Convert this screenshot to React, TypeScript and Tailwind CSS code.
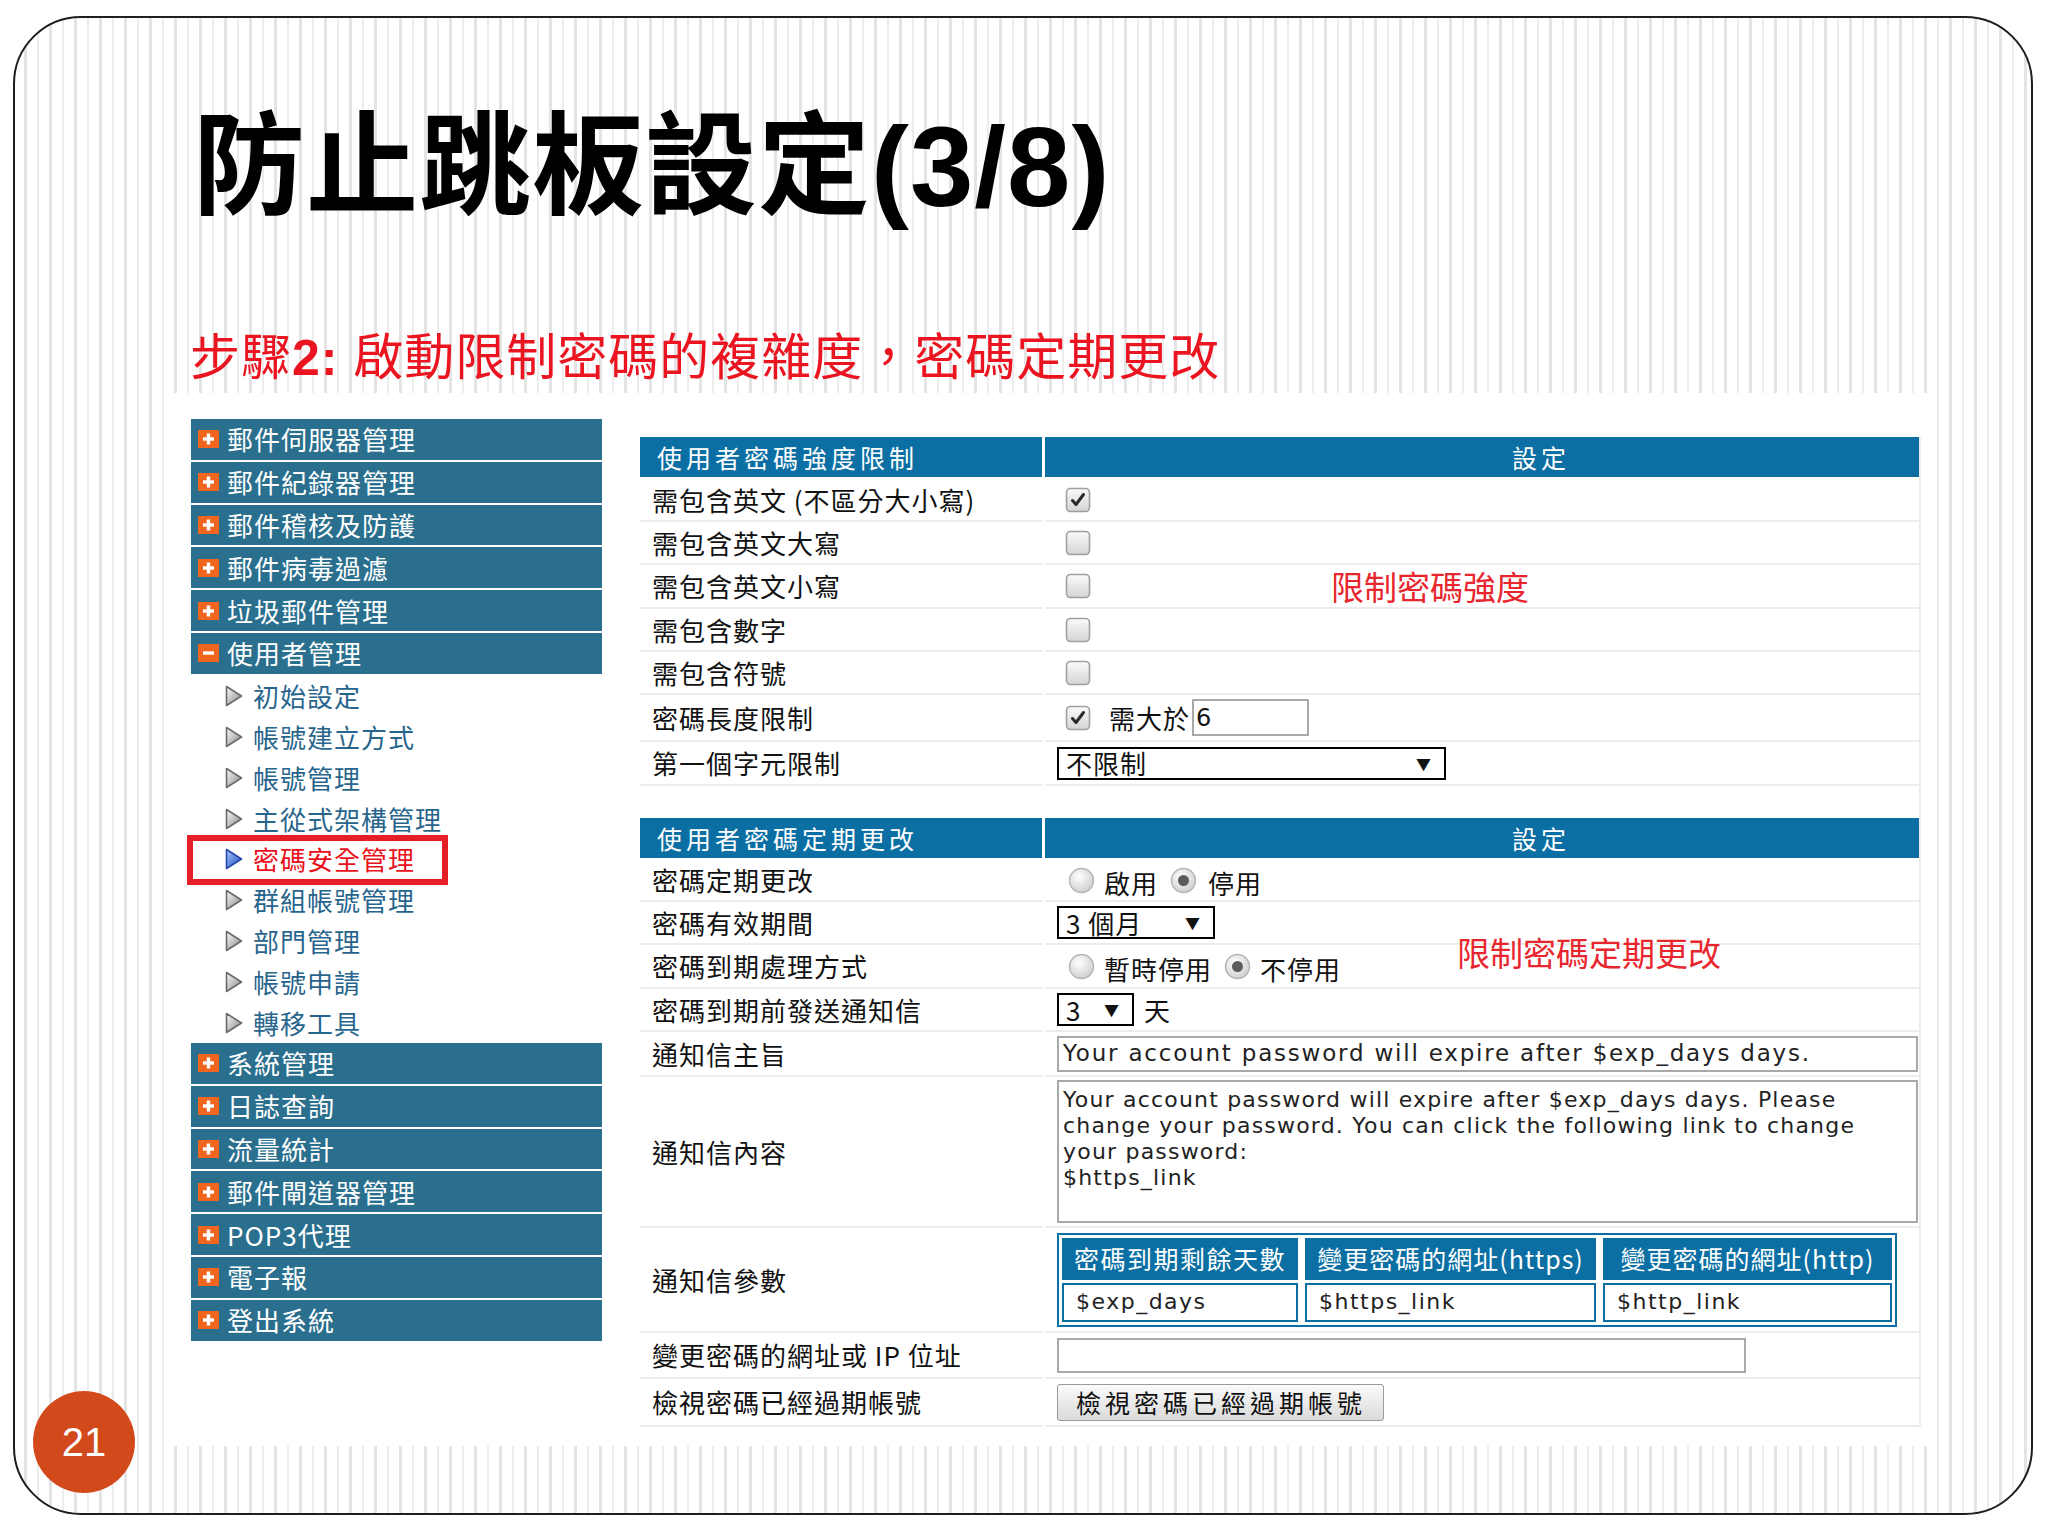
import React from "react";

const topMenu = ["郵件伺服器管理", "郵件紀錄器管理", "郵件稽核及防護", "郵件病毒過濾", "垃圾郵件管理"];
const subMenu = ["初始設定", "帳號建立方式", "帳號管理", "主從式架構管理", "密碼安全管理", "群組帳號管理", "部門管理", "帳號申請", "轉移工具"];
const bottomMenu = ["系統管理", "日誌查詢", "流量統計", "郵件閘道器管理", "POP3代理", "電子報", "登出系統"];

function PlusIcon({ minus }: { minus?: boolean }) {
  return (
    <svg width="21" height="18" viewBox="0 0 21 18" className="shrink-0">
      <rect x="0" y="0" width="21" height="18" fill="#f0661f" />
      <rect x="5" y="7.3" width="11" height="3.4" fill="#ffffff" />
      {!minus && <rect x="8.8" y="3.5" width="3.4" height="11" fill="#ffffff" />}
    </svg>
  );
}

function Arrow({ active }: { active?: boolean }) {
  const id = active ? "arrA" : "arrG";
  return (
    <svg width="18" height="22" viewBox="0 0 18 22" className="shrink-0">
      <defs>
        <linearGradient id={id} x1="0" y1="0" x2="1" y2="1">
          <stop offset="0" stopColor={active ? "#a8c8ff" : "#fbfbfb"} />
          <stop offset="1" stopColor={active ? "#1a4cc2" : "#858585"} />
        </linearGradient>
      </defs>
      <polygon
        points="1.5,1.5 16.5,11 1.5,20.5"
        fill={`url(#${id})`}
        stroke={active ? "#2447a8" : "#6a6a6a"}
        strokeWidth="1.6"
        strokeLinejoin="round"
      />
    </svg>
  );
}

function MenuHeader({ label, minus }: { label: string; minus?: boolean }) {
  return (
    <div className="h-[40.8px] mb-[2px] bg-[#2a6f8e] flex items-center">
      <div className="ml-[7px] flex">
        <PlusIcon minus={minus} />
      </div>
      <span className="ml-[8px] text-[26px] leading-none text-white tracking-[1px]">{label}</span>
    </div>
  );
}

function Checkbox({ checked }: { checked?: boolean }) {
  return (
    <svg width="26" height="26" viewBox="0 0 26 26" className="shrink-0">
      <defs>
        <linearGradient id="cbg" x1="0" y1="0" x2="0" y2="1">
          <stop offset="0" stopColor="#fbfbfb" />
          <stop offset="1" stopColor="#d4d4d4" />
        </linearGradient>
      </defs>
      <rect x="1.5" y="1.5" width="23" height="23" rx="4" fill="url(#cbg)" stroke="#a0a0a0" strokeWidth="1.6" />
      {checked && (
        <path d="M7.5 13.5 L11 17.5 L18.5 7.5" fill="none" stroke="#2a2a2a" strokeWidth="3" strokeLinecap="round" strokeLinejoin="round" />
      )}
    </svg>
  );
}

function Radio({ checked }: { checked?: boolean }) {
  return (
    <svg width="27" height="27" viewBox="0 0 27 27" className="shrink-0">
      <defs>
        <radialGradient id="rbg" cx="0.4" cy="0.35" r="0.7">
          <stop offset="0" stopColor="#ffffff" />
          <stop offset="1" stopColor="#cdcdcd" />
        </radialGradient>
      </defs>
      <circle cx="13.5" cy="13.5" r="12" fill="url(#rbg)" stroke="#b4b4b4" strokeWidth="1.4" />
      {checked && <circle cx="13.5" cy="13.5" r="5.5" fill="#5c5c5c" />}
    </svg>
  );
}

function Select({ label, width }: { label: string; width: string }) {
  return (
    <div className={`${width} h-[33px] border-2 border-black bg-white flex items-center justify-between pl-[7px] pr-[12px]`}>
      <span className="text-[26px] leading-none tracking-[1px]">{label}</span>
      <span className="text-[15px] leading-none">▼</span>
    </div>
  );
}

function Row({
  label,
  h,
  children,
}: {
  label: string;
  h: string;
  children?: React.ReactNode;
}) {
  return (
    <div className={`grid grid-cols-[402px_1fr] gap-x-[3px] ${h}`}>
      <div className="border-b-2 border-[#ececec] flex items-center pl-[12px] text-[26px] leading-none tracking-[1px] text-[#111]">
        {label}
      </div>
      <div className="border-b-2 border-[#ececec] flex items-center pl-[12px] text-[26px] leading-none tracking-[1px] text-[#111]">
        {children}
      </div>
    </div>
  );
}

function TableHeader({ title }: { title: string }) {
  return (
    <div className="grid grid-cols-[402px_1fr] gap-x-[3px] h-[40px] mb-[2px]">
      <div className="bg-[#0b6fa4] flex items-center pl-[17px] text-[25px] leading-none tracking-[4px] text-white">
        {title}
      </div>
      <div className="bg-[#0b6fa4] flex items-center justify-center pl-[118px] text-[25px] leading-none tracking-[4px] text-white">
        設定
      </div>
    </div>
  );
}

const mono = "font-['DejaVu_Sans',sans-serif]";

export default function App() {
  return (
    <div className="w-[2048px] h-[1536px] bg-white pt-[16px] pl-[13px] font-['Liberation_Sans','Noto_Sans_CJK_TC',sans-serif]">
      <div className="relative w-[2020px] h-[1499px] rounded-[68px] border-2 border-[#1e1e1e] overflow-hidden flex flex-col bg-[image:repeating-linear-gradient(90deg,#ffffff_0px,#ffffff_9px,#e4e4e4_9px,#e4e4e4_12px,#ffffff_12px,#ffffff_22px,#ececec_22px,#ececec_24px,#ffffff_24px,#ffffff_25px)]">
        <h1 className="mt-[92px] h-[112px] pl-[178px] text-[112px] leading-none font-bold text-black tracking-[1px] whitespace-nowrap">
          防止跳板設定<span className="text-[114px]">(3/8)</span>
        </h1>
        <div className="mt-[111px] pl-[175px] text-[50px] leading-none text-[#ea1520] tracking-[1px]">
          步驟<span className="font-bold">2:</span> 啟動限制密碼的複雜度，密碼定期更改
        </div>

        <div className="mt-[10px] ml-[155px] w-[1760px] h-[1053px] bg-white flex pl-[21px] pt-[26px] font-['Noto_Sans_CJK_TC',sans-serif]">
          {/* sidebar */}
          <div className="w-[411px] shrink-0 flex flex-col">
            {topMenu.map((m) => (
              <MenuHeader key={m} label={m} />
            ))}
            <MenuHeader label="使用者管理" minus />
            {subMenu.map((s) => {
              const active = s === "密碼安全管理";
              return (
                <div key={s} className="relative h-[40.8px] flex items-center">
                  <div className="ml-[34px] flex">
                    <Arrow active={active} />
                  </div>
                  <span
                    className={`ml-[10px] text-[26px] leading-none tracking-[1px] ${
                      active ? "text-[#e8101a]" : "text-[#28658c]"
                    }`}
                  >
                    {s}
                  </span>
                  {active && (
                    <div className="absolute -left-[4px] -top-[4px] w-[261px] h-[50px] border-[6px] border-[#e61e25]" />
                  )}
                </div>
              );
            })}
            {bottomMenu.map((m) => (
              <MenuHeader key={m} label={m} />
            ))}
          </div>

          {/* content */}
          <div className="ml-[38px] w-[1281px] mt-[18px] flex flex-col border-r-2 border-[#ececec] self-start">
            <TableHeader title="使用者密碼強度限制" />
            <Row label="需包含英文 (不區分大小寫)" h="h-[43px]">
              <div className="ml-[8px] flex"><Checkbox checked /></div>
            </Row>
            <Row label="需包含英文大寫" h="h-[43px]">
              <div className="ml-[8px] flex"><Checkbox /></div>
            </Row>
            <Row label="需包含英文小寫" h="h-[44px]">
              <div className="ml-[8px] flex"><Checkbox /></div>
              <span className="ml-[240px] text-[33px] leading-none tracking-[0px] text-[#e8262e]">限制密碼強度</span>
            </Row>
            <Row label="需包含數字" h="h-[43px]">
              <div className="ml-[8px] flex"><Checkbox /></div>
            </Row>
            <Row label="需包含符號" h="h-[43px]">
              <div className="ml-[8px] flex"><Checkbox /></div>
            </Row>
            <Row label="密碼長度限制" h="h-[47px]">
              <div className="ml-[8px] flex"><Checkbox checked /></div>
              <span className="ml-[18px]">需大於</span>
              <div className={`ml-[2px] w-[117px] h-[37px] border-2 border-[#a9a9a9] flex items-center pl-[2px] text-[24px] ${mono}`}>
                6
              </div>
            </Row>
            <Row label="第一個字元限制" h="h-[44px]">
              <Select label="不限制" width="w-[389px]" />
            </Row>

            <div className="mt-[32px]">
              <TableHeader title="使用者密碼定期更改" />
            </div>
            <Row label="密碼定期更改" h="h-[42px]">
              <div className="ml-[11px] flex"><Radio /></div>
              <span className="ml-[9px] mt-[6px]">啟用</span>
              <div className="ml-[12px] flex"><Radio checked /></div>
              <span className="ml-[11px] mt-[6px]">停用</span>
            </Row>
            <Row label="密碼有效期間" h="h-[43px]">
              <Select label="3 個月" width="w-[158px]" />
            </Row>
            <Row label="密碼到期處理方式" h="h-[44px]">
              <div className="ml-[11px] flex"><Radio /></div>
              <span className="ml-[9px] mt-[6px]">暫時停用</span>
              <div className="ml-[12px] flex"><Radio checked /></div>
              <span className="ml-[9px] mt-[6px]">不停用</span>
              <span className="relative -top-[14px] ml-[116px] text-[33px] leading-none tracking-[0px] text-[#e8262e]">限制密碼定期更改</span>
            </Row>
            <Row label="密碼到期前發送通知信" h="h-[43px]">
              <Select label="3" width="w-[77px]" />
              <span className="ml-[10px]">天</span>
            </Row>
            <Row label="通知信主旨" h="h-[45px]">
              <div className={`mr-[1px] flex-1 h-[36px] border-2 border-[#a9a9a9] flex items-center pl-[4px] text-[23px] leading-none text-[#222] tracking-[1.8px] ${mono}`}>
                Your account password will expire after $exp_days days.
              </div>
            </Row>
            <Row label="通知信內容" h="h-[151px]">
              <div className={`mr-[1px] flex-1 h-[143px] border-2 border-[#a9a9a9] pl-[4px] pt-[5px] text-[22px] leading-[26px] text-[#222] tracking-[1.2px] ${mono}`}>
                Your account password will expire after $exp_days days. Please
                <br />
                change your password. You can click the following link to change
                <br />
                your password:
                <br />
                $https_link
              </div>
            </Row>
            <Row label="通知信參數" h="h-[105px]">
              <div className="w-[840px] h-[94px] border-2 border-[#0b6fa4] p-[3px] grid grid-cols-[236px_291px_1fr] grid-rows-[42px_1fr] gap-x-[7px] gap-y-[3px]">
                <div className="bg-[#0b6fa4] flex items-center justify-center text-[25px] leading-none text-white tracking-[1.5px]">密碼到期剩餘天數</div>
                <div className="bg-[#0b6fa4] flex items-center justify-center text-[25px] leading-none text-white tracking-[1px]">變更密碼的網址(https)</div>
                <div className="bg-[#0b6fa4] flex items-center justify-center text-[25px] leading-none text-white tracking-[1px]">變更密碼的網址(http)</div>
                <div className={`border-2 border-[#0b6fa4] flex items-center pl-[12px] text-[22px] leading-none text-[#222] tracking-[1.5px] ${mono}`}>$exp_days</div>
                <div className={`border-2 border-[#0b6fa4] flex items-center pl-[12px] text-[22px] leading-none text-[#222] tracking-[1.5px] ${mono}`}>$https_link</div>
                <div className={`border-2 border-[#0b6fa4] flex items-center pl-[12px] text-[22px] leading-none text-[#222] tracking-[1.5px] ${mono}`}>$http_link</div>
              </div>
            </Row>
            <Row label="變更密碼的網址或 IP 位址" h="h-[46px]">
              <div className="w-[689px] h-[35px] border-2 border-[#a9a9a9]" />
            </Row>
            <Row label="檢視密碼已經過期帳號" h="h-[48px]">
              <div className="w-[327px] h-[37px] rounded-[3px] border border-[#9a9a9a] bg-gradient-to-b from-[#fbfbfb] to-[#dadada] flex items-center pl-[18px] text-[25px] leading-none tracking-[4px] text-[#111]">
                檢視密碼已經過期帳號
              </div>
            </Row>
          </div>
        </div>

        <div className="absolute left-[18px] top-[1373px] w-[102px] h-[102px] rounded-full bg-[#d24a1b] flex items-center justify-center text-[40px] leading-none text-white font-['Liberation_Sans',sans-serif]">
          21
        </div>
      </div>
    </div>
  );
}
